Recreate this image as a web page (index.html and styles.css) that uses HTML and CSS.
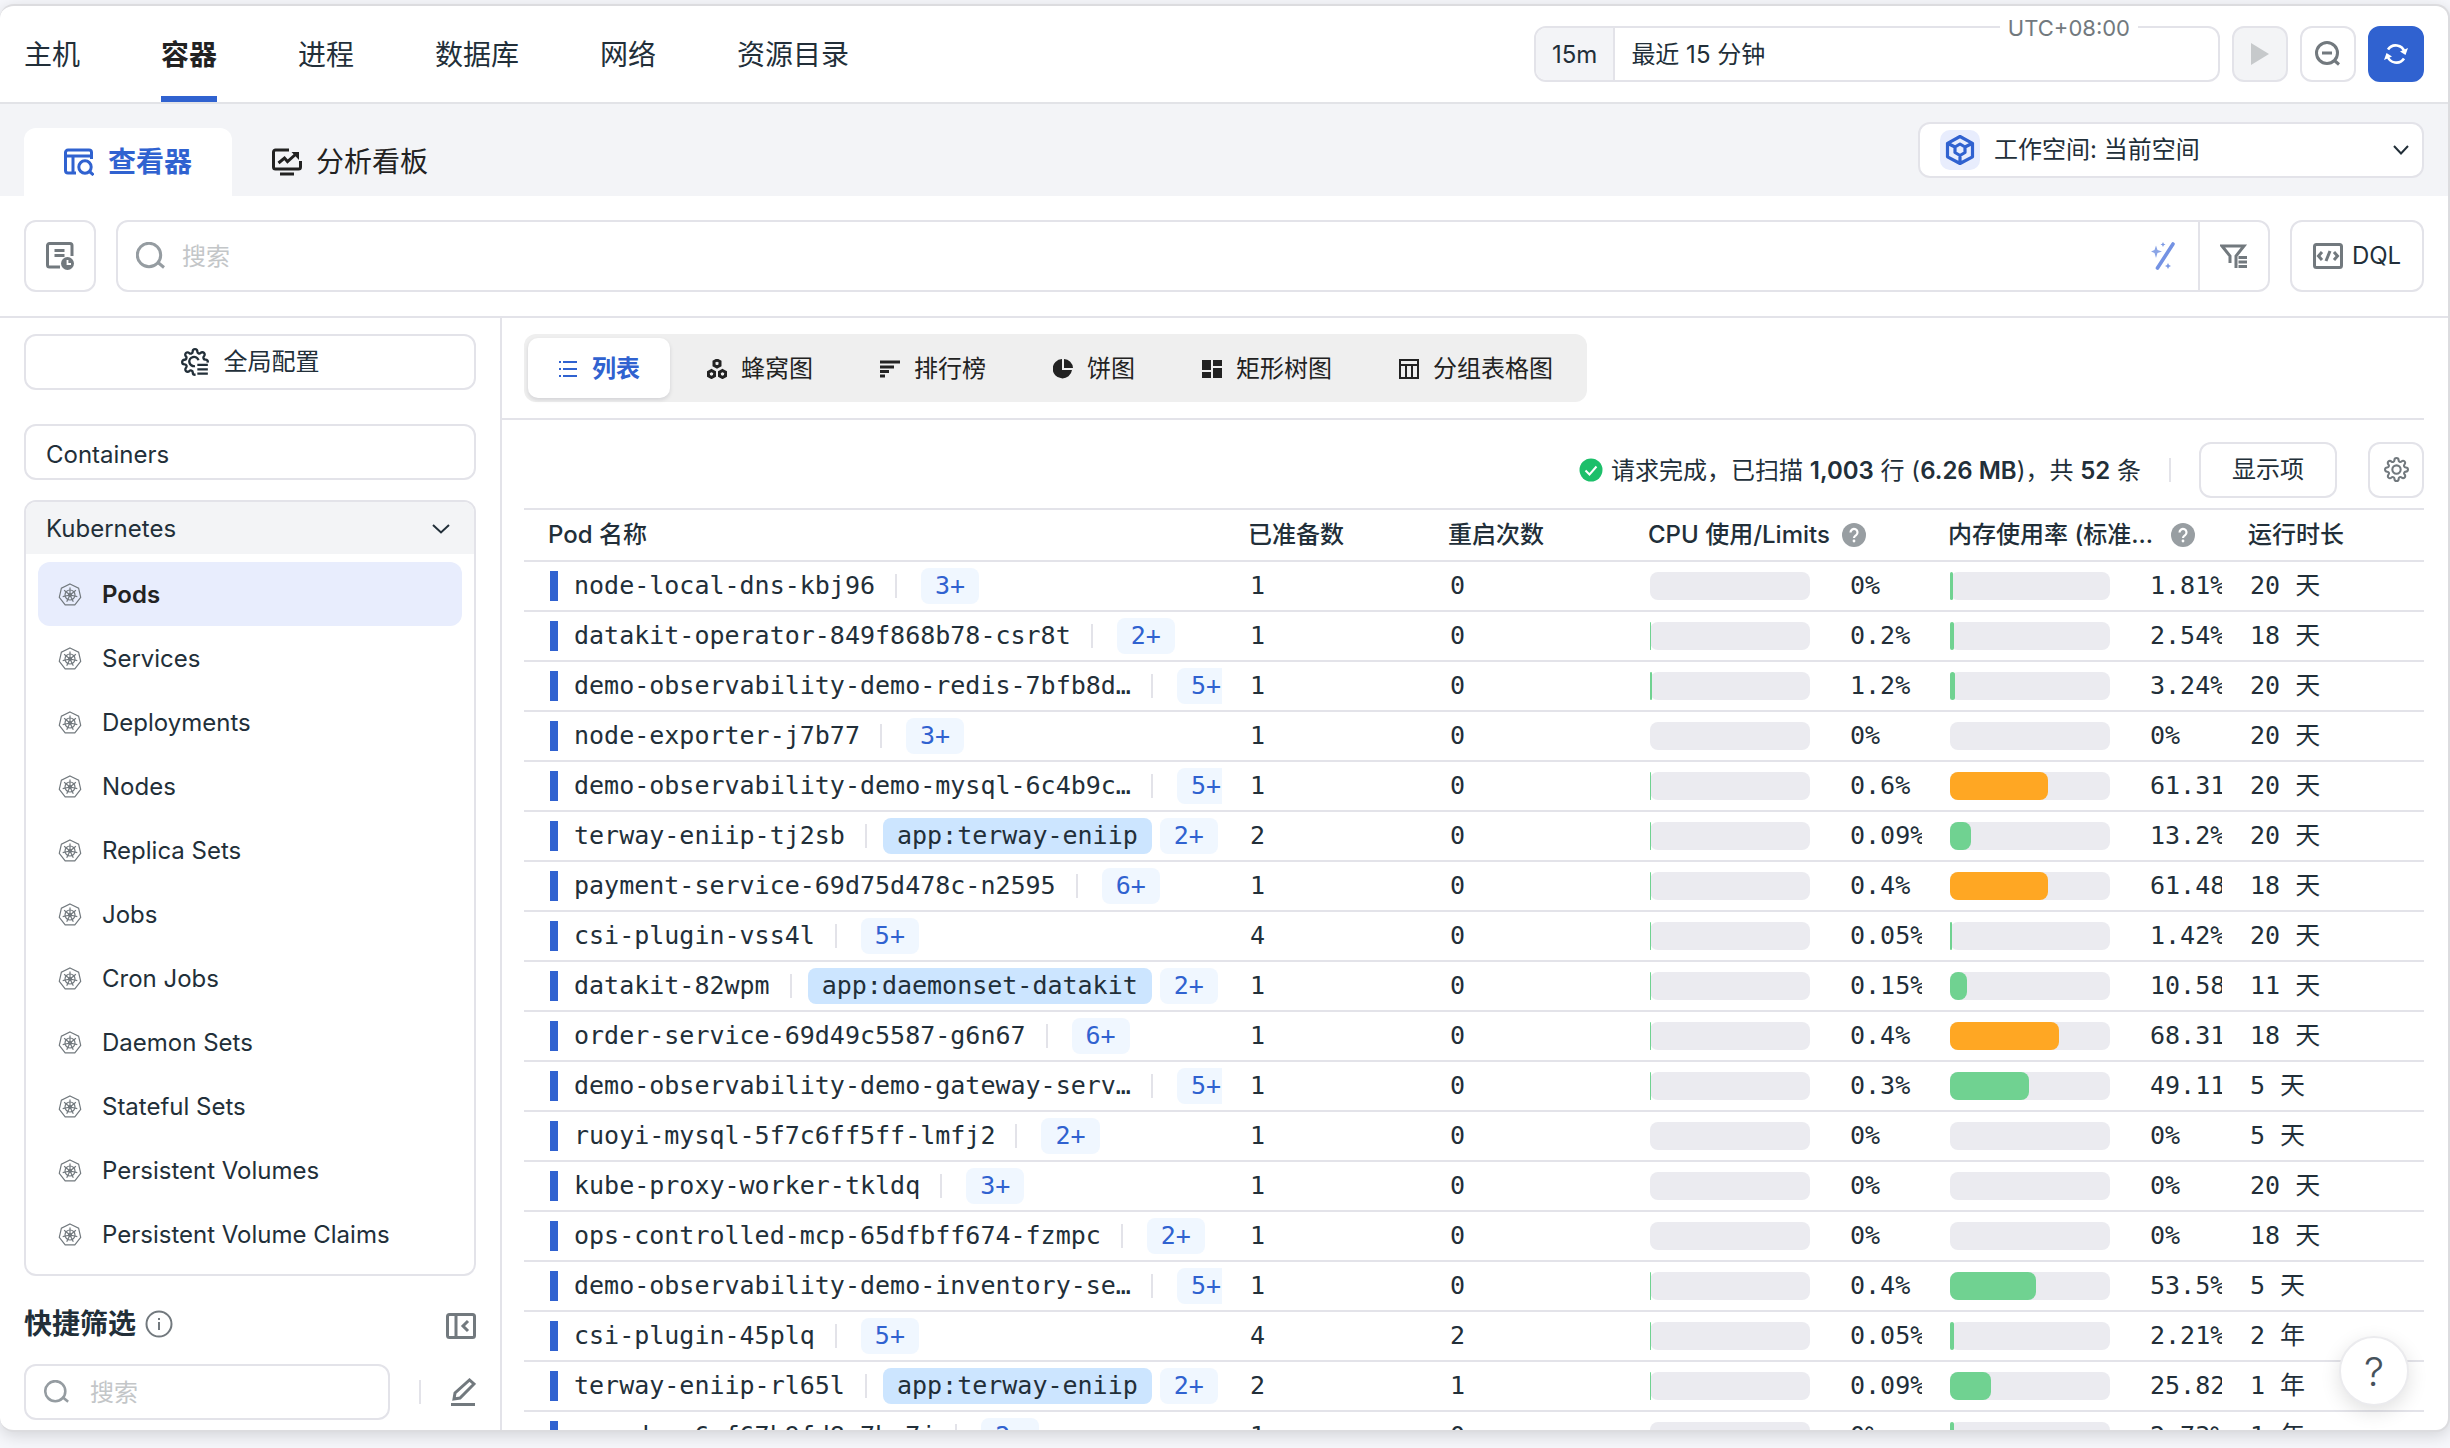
FILE: index.html
```html
<!DOCTYPE html>
<html lang="zh-CN">
<head>
    <meta charset="UTF-8">
    <meta name="viewport" content="width=device-width, initial-scale=1.0">
    <title>容器 - Pods</title>
    <link rel="stylesheet" href="styles.css">
</head>
<body>

    <svg class="sprite" aria-hidden="true">
        <symbol id="k8s" viewBox="0 0 24 24">
            <path d="M12 1l8.6 4.1 2.1 9.3-5.9 7.5H7.2l-5.9-7.5 2.1-9.3z"/>
            <circle cx="12" cy="12" r="5"/>
            <circle cx="12" cy="12" r="1.5"/>
            <path d="M12 12V4.500M12 12l5.900-4.700M12 12l7.300 1.700M12 12l3.300 6.800M12 12l-3.300 6.800M12 12l-7.300 1.700M12 12L6.100 7.300"/>
        </symbol>
        <symbol id="search" viewBox="0 0 30 28">
            <circle cx="13" cy="13" r="11.700"/>
            <path d="M22 20.500l6 5"/>
        </symbol>
        <symbol id="gear" viewBox="0 0 24 24">
            <path d="M19.4 15a1.65 1.65 0 0 0 .33 1.82l.06.06a2 2 0 0 1 0 2.83 2 2 0 0 1-2.83 0l-.06-.06a1.65 1.65 0 0 0-1.82-.33 1.65 1.65 0 0 0-1 1.51V21a2 2 0 0 1-2 2 2 2 0 0 1-2-2v-.09A1.65 1.65 0 0 0 9 19.4a1.65 1.65 0 0 0-1.82.33l-.06.06a2 2 0 0 1-2.83 0 2 2 0 0 1 0-2.83l.06-.06a1.65 1.65 0 0 0 .33-1.82 1.65 1.65 0 0 0-1.51-1H3a2 2 0 0 1-2-2 2 2 0 0 1 2-2h.09A1.65 1.65 0 0 0 4.6 9a1.65 1.65 0 0 0-.33-1.82l-.06-.06a2 2 0 0 1 0-2.83 2 2 0 0 1 2.83 0l.06.06a1.65 1.65 0 0 0 1.82.33H9a1.65 1.65 0 0 0 1-1.51V3a2 2 0 0 1 2-2 2 2 0 0 1 2 2v.09a1.65 1.65 0 0 0 1 1.51 1.65 1.65 0 0 0 1.82-.33l.06-.06a2 2 0 0 1 2.83 0 2 2 0 0 1 0 2.83l-.06.06a1.65 1.65 0 0 0-.33 1.82V9a1.65 1.65 0 0 0 1.51 1H21a2 2 0 0 1 2 2 2 2 0 0 1-2 2h-.09a1.65 1.65 0 0 0-1.51 1z"/>
        </symbol>
        <symbol id="help" viewBox="0 0 24 24">
            <circle cx="12" cy="12" r="12" fill="#989ea2"/>
            <path d="M8.500 9.500a3.500 3.500 0 1 1 5.500 2.800c-1.300.9-2 1.300-2 2.700" fill="none" stroke="#fff" stroke-width="2.200"/>
            <circle cx="12" cy="18" r="1.400" fill="#fff"/>
        </symbol>
    </svg>

    <div class="panel">
        <header class="topbar">
            <nav class="nav">
                <a href="#">主机</a>
                <a href="#" class="active">容器</a>
                <a href="#">进程</a>
                <a href="#">数据库</a>
                <a href="#">网络</a>
                <a href="#">资源目录</a>
            </nav>
            <div class="time-tools">
                <div class="time-range">
                    <span class="time-short">15m</span>
                    <input type="text" value="最近 15 分钟" aria-label="时间范围">
                    <span class="timezone">UTC+08:00</span>
                </div>
                <button class="square muted" type="button" aria-label="播放" disabled>
                    <svg width="18" height="22" viewBox="0 0 18 22"><path d="M0 0l18 11L0 22z" fill="#c6c9cb"/></svg>
                </button>
                <button class="square" type="button" aria-label="缩小">
                    <svg class="line grey thick" width="26" height="26" viewBox="0 0 26 26"><circle cx="12" cy="12" r="10.500"/><path d="M7 12h10M20 20l4 3.500"/></svg>
                </button>
                <button class="square primary" type="button" aria-label="刷新">
                    <svg width="24" height="22" viewBox="0 0 24 22" fill="none" stroke="#fff" stroke-width="2.600"><path d="M4 6.500A9.200 9.200 0 0 1 20.500 9M20 15.500A9.200 9.200 0 0 1 3.500 13"/><path d="M24 5l-2.500 7L16 8.500zM0 17l2.500-7L8 13.500z" fill="#fff" stroke="none"/></svg>
                </button>
            </div>
        </header>

        <div class="subbar">
            <div class="subtabs">
                <a href="#" class="subtab active">
                    <svg class="line viewer-icon" width="30" height="28" viewBox="0 0 30 28"><path d="M12 25H4a2.500 2.500 0 0 1-2.500-2.500v-18A2.500 2.500 0 0 1 4 2h21a2.500 2.500 0 0 1 2.500 2.500V11M1.500 8h26M9 8v17"/><circle cx="21" cy="19" r="6.200"/><path d="M25.500 23.500l4 3.500"/></svg>
                    查看器
                </a>
                <a href="#" class="subtab">
                    <svg class="line thick" width="30" height="28" viewBox="0 0 30 28"><path d="M17 2H3.500A2 2 0 0 0 1.500 4v15a2 2 0 0 0 2 2h23a2 2 0 0 0 2-2v-6M8 26h14M6.500 15l6-5 3 3.500L24 6"/><path d="M19.500 4H27v8z" fill="currentColor" stroke="none"/></svg>
                    分析看板
                </a>
            </div>
            <div class="workspace">
                <span class="workspace-icon">
                    <svg width="30" height="32" viewBox="0 0 30 32" fill="none" stroke="#3062d0" stroke-width="3.200" stroke-linejoin="round"><path d="M15 2.500l12.500 6.800v13.500L15 29.500 2.500 22.800V9.300zM10 13l5-3 5 3v5.500l-5 3-5-3zM3 9.500l7 3.500M27 9.500L20 13M15 22v7"/></svg>
                </span>
                <select aria-label="工作空间">
                    <option>工作空间: 当前空间</option>
                </select>
                <svg class="line" width="16" height="10" viewBox="0 0 16 10"><path d="M1 1l7 7.500L15 1"/></svg>
            </div>
        </div>

        <div class="searchbar">
            <button class="tool-btn history" type="button" aria-label="历史">
                <svg class="line grey thick" width="28" height="28" viewBox="0 0 28 28"><path d="M14 25H3.500A2 2 0 0 1 1.500 23V3.500a2 2 0 0 1 2-2H24a2 2 0 0 1 2 2V14M8.500 8.500h10M8.500 13.500h10"/><circle cx="21.500" cy="21.500" r="6.500" fill="#72797e" stroke="none"/><path d="M21.500 18v4H25" stroke="#fff" stroke-width="1.800"/></svg>
            </button>
            <div class="search-box">
                <svg class="line light thick" width="30" height="28"><use href="#search"/></svg>
                <input type="text" placeholder="搜索" aria-label="搜索">
                <button class="plain wand" type="button" aria-label="智能查询">
                    <svg width="24" height="28" viewBox="0 0 24 28"><path d="M22 2L6.500 26" stroke="#7492e3" stroke-width="3.600" stroke-linecap="round"/><path d="M5 3.500l1.500 4.500L11 9.500 6.500 11 5 16 3.500 11 0 9.500 3.500 8z" fill="#8ba5e6"/><path d="M12 0l.8 1.700 1.700.8-1.700.8L12 5l-.8-1.700-1.700-.8 1.700-.8zM17 21l1 2 2 1-2 1-1 2-1-2-2-1 2-1z" fill="#7d9ae5"/></svg>
                </button>
                <button class="plain filter" type="button" aria-label="筛选">
                    <svg class="line grey thick" width="28" height="24" viewBox="0 0 28 24"><path d="M10 19v-7L2 2h22l-8 10v12M18.500 13.500h8.500M18.500 18h8.500M18.500 22.500h8.500"/></svg>
                </button>
            </div>
            <button class="tool-btn dql" type="button">
                <svg class="line grey code-icon" width="30" height="26" viewBox="0 0 30 26"><rect x="1.500" y="1.500" width="27" height="23" rx="2"/><path d="M9 9l-3.500 4L9 17M21 9l3.500 4-3.500 4M17 8l-4 10"/></svg>
                DQL
            </button>
        </div>

        <div class="content">
            <aside class="sidebar">
                <button class="box-btn" type="button">
                    <svg class="line" width="28" height="28" viewBox="0 0 24 24"><use href="#gear"/><path d="M15 10.500a4 4 0 1 0-3 5"/><path d="M12.500 12.500H24V24H12.500z" fill="#fff" stroke="none"/><path d="M14 14.500h9M14 18.300h9M14 22h9"/></svg>
                    全局配置
                </button>
                <a href="#" class="box-link">Containers</a>
                <div class="group">
                    <button class="group-title" type="button">
                        Kubernetes
                        <svg class="line" width="18" height="10" viewBox="0 0 18 10"><path d="M1 1l8 7.500L17 1"/></svg>
                    </button>
                    <ul class="kinds">
                        <li><a href="#" class="active"><svg><use href="#k8s"/></svg>Pods</a></li>
                        <li><a href="#"><svg><use href="#k8s"/></svg>Services</a></li>
                        <li><a href="#"><svg><use href="#k8s"/></svg>Deployments</a></li>
                        <li><a href="#"><svg><use href="#k8s"/></svg>Nodes</a></li>
                        <li><a href="#"><svg><use href="#k8s"/></svg>Replica Sets</a></li>
                        <li><a href="#"><svg><use href="#k8s"/></svg>Jobs</a></li>
                        <li><a href="#"><svg><use href="#k8s"/></svg>Cron Jobs</a></li>
                        <li><a href="#"><svg><use href="#k8s"/></svg>Daemon Sets</a></li>
                        <li><a href="#"><svg><use href="#k8s"/></svg>Stateful Sets</a></li>
                        <li><a href="#"><svg><use href="#k8s"/></svg>Persistent Volumes</a></li>
                        <li><a href="#"><svg><use href="#k8s"/></svg>Persistent Volume Claims</a></li>
                    </ul>
                </div>
                <div class="quick-title">
                    <h2>快捷筛选</h2>
                    <svg class="line grey" width="28" height="28" viewBox="0 0 28 28"><circle cx="14" cy="14" r="12.500"/><path d="M14 12v8M14 8v2"/></svg>
                    <button class="plain collapse" type="button" aria-label="收起">
                        <svg class="line grey thick" width="30" height="26" viewBox="0 0 30 26"><rect x="1.500" y="1.500" width="27" height="23" rx="2"/><path d="M10 2v22M22 8l-5 5 5 5"/></svg>
                    </button>
                </div>
                <div class="quick-search">
                    <div class="quick-input">
                        <svg class="line light thick" width="26" height="24"><use href="#search"/></svg>
                        <input type="text" placeholder="搜索" aria-label="搜索筛选项">
                    </div>
                    <span class="divider"></span>
                    <button class="plain" type="button" aria-label="编辑">
                        <svg class="line grey thick" width="26" height="28" viewBox="0 0 26 28"><path d="M4 21l1-6L19.500 2l4.500 4-14 14zM1 26.500h24"/></svg>
                    </button>
                </div>
            </aside>

            <main class="main">
                <div class="views">
                    <div class="view-tabs">
                        <button type="button" class="active">
                            <svg class="line" width="20" height="20" viewBox="0 0 20 20"><path d="M5 3h14M5 10h14M5 17h14M1 3h2M1 10h2M1 17h2"/></svg>列表
                        </button>
                        <button type="button">
                            <svg class="line thick" width="20" height="20" viewBox="0 0 20 20"><path d="M10 1l3 1.700v3.600L10 8 7 6.300V2.700zM4.500 11.500l3 1.700v3.600l-3 1.700-3-1.700v-3.600zM15.500 11.500l3 1.700v3.600l-3 1.700-3-1.700v-3.600z"/></svg>蜂窝图
                        </button>
                        <button type="button">
                            <svg class="line thick" width="20" height="20" viewBox="0 0 20 20"><path d="M0 3h20M0 8h14M0 12.500h9M0 17h5"/></svg>排行榜
                        </button>
                        <button type="button">
                            <svg width="20" height="20" viewBox="0 0 20 20" fill="currentColor"><path d="M9 0v11h10A9.700 9.700 0 1 1 9 0zM11 0a9.500 9.500 0 0 1 9 9h-9z"/></svg>饼图
                        </button>
                        <button type="button">
                            <svg width="20" height="20" viewBox="0 0 20 20" fill="currentColor"><path d="M0 1h9v10H0zM0 13h9v6H0zM11 1h9v6h-9zM11 9h9v10h-9z"/></svg>矩形树图
                        </button>
                        <button type="button">
                            <svg class="line" width="20" height="20" viewBox="0 0 20 20"><path d="M1 1h18v18H1zM1 6h18M7 6v13M13 6v13"/></svg>分组表格图
                        </button>
                    </div>
                </div>

                <div class="status">
                    <svg width="24" height="24" viewBox="0 0 24 24"><circle cx="12" cy="12" r="11.500" fill="#1dbf6a"/><path d="M6.500 12.500l4 4 7-8" fill="none" stroke="#fff" stroke-width="2"/></svg>
                    <p>请求完成，已扫描 <b>1,003</b> 行 (<b>6.26 MB</b>)，共 <b>52</b> 条</p>
                    <span class="divider"></span>
                    <button class="box-btn columns-btn" type="button">显示项</button>
                    <button class="square" type="button" aria-label="设置">
                        <svg class="line grey" width="25" height="25" viewBox="0 0 24 24"><use href="#gear"/><circle cx="12" cy="12" r="4"/></svg>
                    </button>
                </div>

                <table class="pods">
                    <colgroup>
                        <col>
                        <col class="col-count">
                        <col class="col-count">
                        <col class="col-usage">
                        <col class="col-usage">
                        <col class="col-count">
                    </colgroup>
                    <thead>
                        <tr>
                            <th>Pod 名称</th>
                            <th>已准备数</th>
                            <th>重启次数</th>
                            <th><div class="th-help"><span>CPU 使用/Limits</span><svg><use href="#help"/></svg></div></th>
                            <th><div class="th-help wide"><span>内存使用率 (标准...</span><svg><use href="#help"/></svg></div></th>
                            <th>运行时长</th>
                        </tr>
                    </thead>
                    <tbody id="podRows"></tbody>
                </table>
            </main>
        </div>

        <button class="float-help" type="button" aria-label="帮助">?</button>
    </div>

    <script>
        // name, label, more, ready, restarts, cpu, memory, uptime
        const pods = [
            ['node-local-dns-kbj96', '', '3+', 1, 0, 0, 1.81, '20 天'],
            ['datakit-operator-849f868b78-csr8t', '', '2+', 1, 0, 0.2, 2.54, '18 天'],
            ['demo-observability-demo-redis-7bfb8d…', '', '5+', 1, 0, 1.2, 3.24, '20 天'],
            ['node-exporter-j7b77', '', '3+', 1, 0, 0, 0, '20 天'],
            ['demo-observability-demo-mysql-6c4b9c…', '', '5+', 1, 0, 0.6, 61.31, '20 天'],
            ['terway-eniip-tj2sb', 'app:terway-eniip', '2+', 2, 0, 0.09, 13.2, '20 天'],
            ['payment-service-69d75d478c-n2595', '', '6+', 1, 0, 0.4, 61.48, '18 天'],
            ['csi-plugin-vss4l', '', '5+', 4, 0, 0.05, 1.42, '20 天'],
            ['datakit-82wpm', 'app:daemonset-datakit', '2+', 1, 0, 0.15, 10.58, '11 天'],
            ['order-service-69d49c5587-g6n67', '', '6+', 1, 0, 0.4, 68.31, '18 天'],
            ['demo-observability-demo-gateway-serv…', '', '5+', 1, 0, 0.3, 49.11, '5 天'],
            ['ruoyi-mysql-5f7c6ff5ff-lmfj2', '', '2+', 1, 0, 0, 0, '5 天'],
            ['kube-proxy-worker-tkldq', '', '3+', 1, 0, 0, 0, '20 天'],
            ['ops-controlled-mcp-65dfbff674-fzmpc', '', '2+', 1, 0, 0, 0, '18 天'],
            ['demo-observability-demo-inventory-se…', '', '5+', 1, 0, 0.4, 53.5, '5 天'],
            ['csi-plugin-45plq', '', '5+', 4, 2, 0.05, 2.21, '2 年'],
            ['terway-eniip-rl65l', 'app:terway-eniip', '2+', 2, 1, 0.09, 25.82, '1 年'],
            ['ops-dev-6cf67b9fd8-7bc7j', '', '2+', 1, 0, 0, 2.73, '1 年']
        ];

        function usage(value) {
            const level = value > 60 ? 'fill warn' : 'fill';
            const fill = value > 0 ? `<div class="${level}" style="width: ${value}%"></div>` : '';
            return `<div class="usage"><div class="track">${fill}</div><span>${value}%</span></div>`;
        }

        document.getElementById('podRows').innerHTML = pods.map(p => `
            <tr>
                <td>
                    <div class="pod">
                        <span class="bar"></span>
                        <span class="pod-name">${p[0]}</span>
                        <span class="divider"></span>
                        <span class="labels">${p[1] ? `<span class="tag">${p[1]}</span>` : ''}</span>
                        <span class="more">${p[2]}</span>
                    </div>
                </td>
                <td>${p[3]}</td>
                <td>${p[4]}</td>
                <td>${usage(p[5])}</td>
                <td>${usage(p[6])}</td>
                <td>${p[7]}</td>
            </tr>`).join('');
    </script>

</body>
</html>
```
FILE: styles.css
```css
* {
    box-sizing: border-box;
}
body {
    margin: 0;
    padding: 4px 0 16px;
    height: 100vh;
    overflow: hidden;
    background: #f6f7fb;
    color: #222f39;
    font-family: Inter, "Noto Sans CJK SC", sans-serif;
    font-size: 24px;
    line-height: 32px;
}
a {
    color: inherit;
    text-decoration: none;
}
button, input, select {
    font: inherit;
    color: inherit;
    margin: 0;
}
button {
    cursor: pointer;
}
input, select {
    border: none;
    outline: none;
    background: transparent;
    padding: 2px 0 0;
    min-width: 0;
}
input::placeholder {
    color: #c3c6c8;
}
svg {
    flex: none;
}
.sprite {
    position: absolute;
    width: 0;
    height: 0;
}
.line {
    fill: none;
    stroke: currentColor;
    stroke-width: 2;
}
.thick {
    stroke-width: 3;
}
.grey {
    color: #72797e;
}
.light {
    color: #959ca1;
}
.divider {
    flex: none;
    width: 2px;
    height: 24px;
    background: #e3e3e9;
}
.plain {
    display: flex;
    align-items: center;
    justify-content: center;
    border: none;
    background: none;
    padding: 0;
}

.panel {
    position: relative;
    display: flex;
    flex-direction: column;
    height: 100%;
    overflow: hidden;
    background: #fff;
    border: 2px solid #dcdcdf;
    border-left: none;
    border-radius: 14px;
    box-shadow: 0 4px 16px rgba(0, 0, 0, 0.14);
}

/* top navigation */
.topbar {
    flex: none;
    display: flex;
    justify-content: space-between;
    height: 98px;
    padding: 0 24px;
    border-bottom: 2px solid #e2e3e7;
}
.nav {
    display: flex;
    gap: 81px;
    font-size: 28px;
}
.nav a {
    display: flex;
    align-items: center;
    border-top: 8px solid transparent;
    border-bottom: 6px solid transparent;
}
.nav .active {
    color: #222;
    font-weight: 700;
    border-bottom-color: #3062d0;
}
.time-tools {
    display: flex;
    align-items: center;
    gap: 12px;
}
.time-range {
    position: relative;
    display: flex;
    width: 686px;
    height: 56px;
    border: 2px solid #e3e3e9;
    border-radius: 12px;
}
.time-short {
    padding: 11px 16px 9px;
    background: #f3f4f7;
    border-right: 2px solid #e3e3e9;
    border-radius: 10px 0 0 10px;
}
.time-range input {
    flex: 1;
    padding-left: 16px;
}
.timezone {
    position: absolute;
    top: -15px;
    right: 80px;
    padding: 0 8px;
    background: #fff;
    color: #72797e;
    font-size: 22px;
    line-height: 30px;
}
.square {
    display: flex;
    align-items: center;
    justify-content: center;
    width: 56px;
    height: 56px;
    padding: 0;
    background: #fff;
    border: 2px solid #e3e3e9;
    border-radius: 12px;
}
.square.muted {
    background: #f3f4f6;
}
.square.primary {
    background: #3062d0;
    border-color: #3062d0;
}

/* viewer / dashboard tabs */
.subbar {
    flex: none;
    display: flex;
    align-items: flex-end;
    justify-content: space-between;
    height: 92px;
    padding: 0 24px;
    background: #f3f4f7;
}
.subtabs {
    display: flex;
}
.subtab {
    display: flex;
    align-items: center;
    gap: 14px;
    height: 68px;
    padding: 0 40px;
    border-radius: 12px 12px 0 0;
    color: #222;
    font-size: 28px;
}
.subtab.active {
    background: #fff;
    color: #3062d0;
    font-weight: 700;
}
.viewer-icon, .code-icon {
    stroke-width: 3;
}
.workspace {
    display: flex;
    align-items: center;
    width: 506px;
    height: 56px;
    margin-bottom: 18px;
    padding: 0 13px 0 20px;
    background: #fff;
    border: 2px solid #e3e3e9;
    border-radius: 12px;
}
.workspace-icon {
    display: flex;
    align-items: center;
    justify-content: center;
    width: 40px;
    height: 40px;
    margin-right: 14px;
    border-radius: 10px;
    background: #e8edfd;
}
.workspace select {
    flex: 1;
    appearance: none;
    padding: 0;
}

/* query row */
.searchbar {
    flex: none;
    display: flex;
    gap: 20px;
    height: 122px;
    padding: 24px;
    border-bottom: 2px solid #e3e3e9;
}
.tool-btn {
    display: flex;
    align-items: center;
    justify-content: center;
    height: 72px;
    padding: 0;
    background: #fff;
    border: 2px solid #e3e3e9;
    border-radius: 12px;
}
.history {
    width: 72px;
}
.dql {
    gap: 9px;
    width: 134px;
}
.search-box {
    flex: 1;
    display: flex;
    align-items: center;
    height: 72px;
    padding-left: 18px;
    border: 2px solid #e3e3e9;
    border-radius: 12px;
}
.search-box input {
    flex: 1;
    margin-left: 16px;
}
.wand {
    width: 70px;
    height: 68px;
}
.filter {
    width: 70px;
    height: 68px;
    border-left: 2px solid #e3e3e9;
}

.content {
    flex: 1;
    display: flex;
    min-height: 0;
}

/* sidebar */
.sidebar {
    flex: none;
    width: 502px;
    padding: 16px 24px 0;
    border-right: 2px solid #e3e3e9;
}
.box-btn, .box-link {
    display: flex;
    align-items: center;
    width: 100%;
    height: 56px;
    background: #fff;
    border: 2px solid #e3e3e9;
    border-radius: 12px;
}
.box-btn {
    justify-content: center;
    gap: 15px;
}
.box-link {
    margin: 34px 0 20px;
    padding: 6px 20px 0;
}
.group {
    border: 2px solid #e3e3e9;
    border-radius: 12px;
    overflow: hidden;
}
.group-title {
    display: flex;
    align-items: center;
    justify-content: space-between;
    width: 100%;
    height: 52px;
    padding: 2px 24px 0 20px;
    border: none;
    background: #f3f4f6;
}
.kinds {
    list-style: none;
    margin: 0;
    padding: 8px 12px;
}
.kinds a {
    display: flex;
    align-items: center;
    gap: 20px;
    height: 64px;
    padding: 2px 20px 0;
    border-radius: 12px;
}
.kinds .active {
    background: #e8edfd;
    color: #222;
    font-weight: 600;
}
.kinds svg {
    width: 24px;
    height: 24px;
    fill: none;
    stroke: #72797e;
    stroke-width: 1.2;
}
.quick-title {
    display: flex;
    align-items: center;
    gap: 9px;
    margin: 32px 0 24px;
}
.quick-title h2 {
    margin: 0;
    font-size: 28px;
    line-height: 32px;
    font-weight: 700;
}
.collapse {
    margin-left: auto;
    padding-top: 4px;
}
.quick-search {
    display: flex;
    align-items: center;
    justify-content: space-between;
}
.quick-input {
    display: flex;
    align-items: center;
    gap: 20px;
    width: 366px;
    height: 56px;
    padding: 0 18px;
    border: 2px solid #e3e3e9;
    border-radius: 12px;
}

/* main area */
.main {
    flex: 1;
    min-width: 0;
    overflow: hidden;
    padding: 0 24px 0 22px;
}
.views {
    margin: 0 0 0 -22px;
    padding: 16px 22px;
    border-bottom: 2px solid #e3e3e9;
}
.view-tabs {
    display: inline-flex;
    gap: 7px;
    padding: 4px;
    border-radius: 12px;
    background: #efefef;
    vertical-align: top;
}
.view-tabs button {
    display: flex;
    align-items: center;
    gap: 14px;
    height: 60px;
    padding: 2px 30px 0;
    border: none;
    border-radius: 10px;
    background: none;
    color: #222;
}
.view-tabs .active {
    background: #fff;
    color: #3062d0;
    font-weight: 700;
    box-shadow: 0 2px 4px rgba(0, 0, 30, 0.12);
}
.status {
    display: flex;
    align-items: center;
    justify-content: flex-end;
    height: 88px;
    padding-top: 11px;
}
.status p {
    margin: 2px 28px 0 8px;
}
.status b {
    font-weight: 600;
}
.columns-btn {
    width: 138px;
    margin: 0 31px 0 28px;
}

.pods {
    width: 100%;
    table-layout: fixed;
    border-collapse: collapse;
}
.col-count {
    width: 200px;
}
.col-usage {
    width: 300px;
}
.pods th, .pods td {
    height: 50px;
    padding: 0 2px 0 26px;
    border-bottom: 2px solid #e3e3e9;
    text-align: left;
    white-space: nowrap;
}
.pods th {
    height: 52px;
    padding-left: 24px;
    border-top: 2px solid #e3e3e9;
    font-weight: 500;
}
.pods td {
    font-family: "DejaVu Sans Mono", "Noto Sans CJK SC", monospace;
    font-size: 25px;
}
.th-help {
    display: flex;
    align-items: center;
    gap: 12px;
}
.th-help.wide {
    gap: 18px;
}
.th-help svg {
    width: 24px;
    height: 24px;
}
.pod {
    display: flex;
    align-items: center;
    height: 48px;
    overflow: hidden;
}
.bar {
    flex: none;
    width: 8px;
    height: 30px;
    margin-right: 16px;
    background: #3062d0;
}
.pod-name {
    margin-right: 20px;
}
.labels {
    margin: 0 8px 0 16px;
}
.tag, .more {
    display: block;
    height: 36px;
    padding: 0 14px;
    border-radius: 8px;
    line-height: 36px;
}
.tag {
    background: #cce5ff;
}
.more {
    background: #f0f7ff;
    color: #3062d0;
}
.usage {
    display: flex;
    align-items: center;
    overflow: hidden;
}
.track {
    flex: none;
    width: 160px;
    height: 28px;
    margin-right: 40px;
    border-radius: 8px;
    background: #ebebf0;
}
.fill {
    min-width: 1px;
    height: 28px;
    border-radius: 8px;
    background: #70d291;
}
.fill.warn {
    background: #ffa723;
}

.float-help {
    position: absolute;
    right: 39px;
    bottom: 24px;
    width: 70px;
    height: 70px;
    padding: 2px 0 0;
    border: 2px solid #ebebee;
    border-radius: 50%;
    background: #fff;
    box-shadow: 0 6px 20px rgba(0, 0, 0, 0.12);
    color: #46525b;
    font-size: 40px;
    font-weight: 300;
    line-height: 64px;
}
```
